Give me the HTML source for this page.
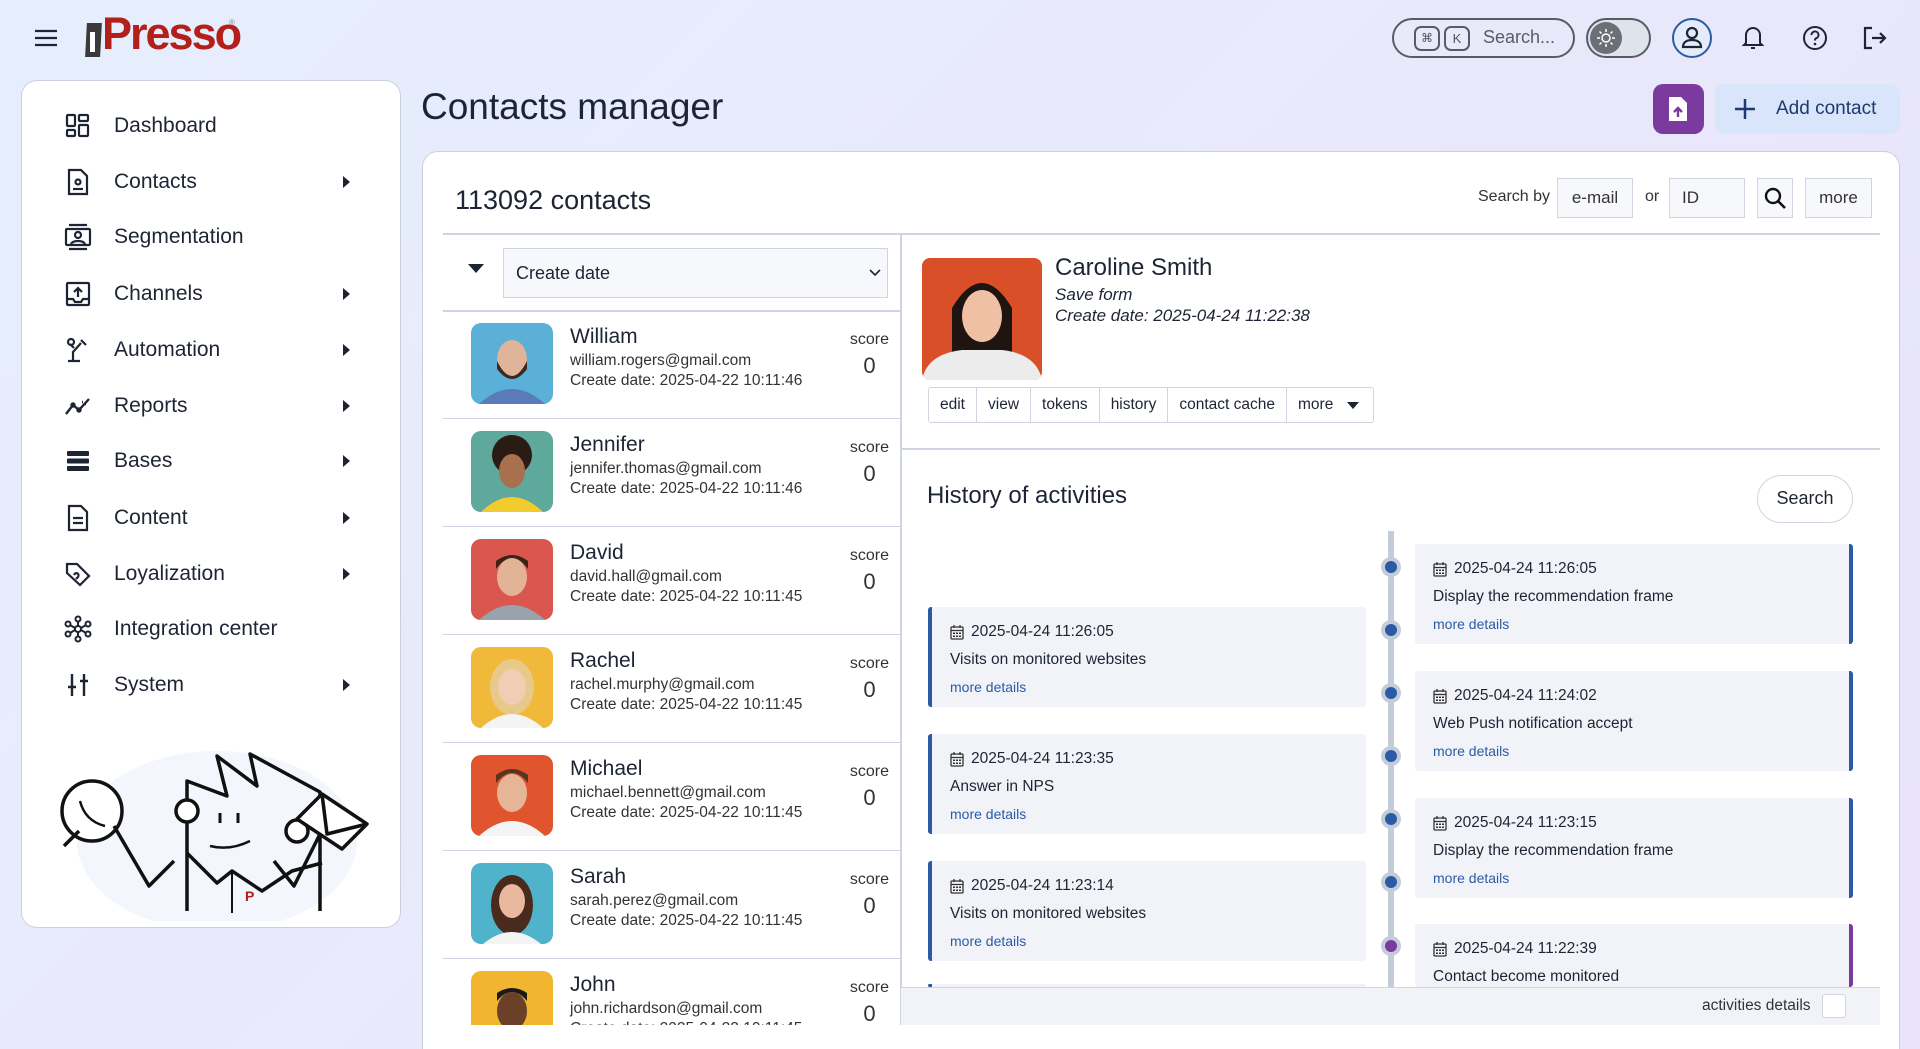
<!DOCTYPE html>
<html style="overflow:hidden;height:1049px"><head><meta charset="utf-8"><style>
*{box-sizing:border-box;margin:0;padding:0}
body{width:1920px;height:1049px;overflow:hidden;font-family:"Liberation Sans",sans-serif;color:#1d2433;background:linear-gradient(135deg,#e6eefd 0%,#e9e9fb 50%,#e8e2fa 100%);position:relative}
.a{position:absolute}
.side{left:21px;top:80px;width:380px;height:848px;background:#fff;border:1.5px solid #c9d0de;border-radius:16px}
.mi{position:absolute;left:0;width:100%;height:40px;display:flex;align-items:center;font-size:21px}
.mi svg{position:absolute;left:42px;width:28px;height:28px}
.mi span{position:absolute;left:92px}
.mi i{position:absolute;left:321px;width:0;height:0;border-top:6px solid transparent;border-bottom:6px solid transparent;border-left:7px solid #1d2433}
.card{left:422px;top:151px;width:1478px;height:898px;background:#fff;border:1.5px solid #c9d0de;border-bottom:none;border-radius:16px 16px 0 0}
.box{position:absolute;border:1.5px solid #cfd5e0;background:#f7f8fc;font-size:17px;display:flex;align-items:center;justify-content:center;color:#333}
.row{position:absolute;left:443px;width:458px;height:108px;border-bottom:1.5px solid #cfd5e0}
.av{position:absolute;left:28px;top:12px;width:82px;height:81px;border-radius:10px;overflow:hidden}
.nm{position:absolute;left:127px;top:14px;font-size:21px}
.em{position:absolute;left:127px;top:41px;font-size:15.5px;color:#333}
.dt{position:absolute;left:127px;top:61px;font-size:15.5px;color:#333}
.sc{position:absolute;right:12px;top:20px;font-size:16px;text-align:center;color:#333}
.sc b{display:block;font-weight:normal;font-size:22px;margin-top:4px}
.tc{position:absolute;width:438px;height:100px;background:#f1f3f9;border-radius:3px;font-size:15.5px}
.tc.l{left:928px;border-left:4px solid #2a5ba4}
.tc.r{left:1415px;border-right:4px solid #2a5ba4}
.tc .d{position:absolute;left:18px;top:16px;display:flex;align-items:center;gap:7px}
.tc .t{position:absolute;left:18px;top:44px}
.tc .m{position:absolute;left:18px;top:72px;color:#2a5ba4;font-size:14px}
.dot{position:absolute;left:1381px;width:20px;height:20px;border-radius:50%;background:#c5ccd9}
.dot:after{content:"";position:absolute;left:4px;top:4px;width:12px;height:12px;border-radius:50%;background:#2a5ba4}
.dot.p:after{background:#7b3aa0}
.btns{position:absolute;left:928px;top:387px;height:36px;display:flex;border:1.5px solid #cfd5e0;border-radius:3px}
.btns div{padding:0 11px;border-right:1.5px solid #cfd5e0;font-size:15.5px;display:flex;align-items:center}
.btns div:last-child{border:none}
</style></head><body>
<svg width="0" height="0" style="position:absolute"><defs><symbol id="cal" viewBox="0 0 14 16"><g fill="none" stroke="#333" stroke-width="1.3"><rect x="1" y="3" width="12" height="12" rx="1"/><path d="M1 6.5h12M4 1v3M10 1v3"/></g><g fill="#333"><rect x="3" y="8.5" width="2" height="1.5"/><rect x="6" y="8.5" width="2" height="1.5"/><rect x="9" y="8.5" width="2" height="1.5"/><rect x="3" y="11.5" width="2" height="1.5"/><rect x="6" y="11.5" width="2" height="1.5"/><rect x="9" y="11.5" width="2" height="1.5"/></g></symbol></defs></svg>
<!-- header -->
<svg class="a" style="left:34px;top:29px" width="24" height="18"><path d="M1 2h22M1 9h22M1 16h22" stroke="#1d2433" stroke-width="2.2"/></svg>
<div class="a" style="left:86px;top:23px;width:15px;height:34px;background:#3a3a3a;transform:skew(-3deg)"></div>
<div class="a" style="left:90px;top:32px;width:5px;height:20px;background:#fff"></div>
<div class="a" style="left:102px;top:8px;font-size:45px;font-weight:bold;color:#b3201a;letter-spacing:-2px">Presso</div>
<div class="a" style="left:229px;top:18px;font-size:8px;color:#888">®</div>

<div class="a" style="left:1392px;top:18px;width:183px;height:40px;border:2.5px solid #555c66;border-radius:20px"></div>
<div class="a" style="left:1414px;top:26px;width:26px;height:25px;border:2px solid #555c66;border-radius:7px;font-size:12px;text-align:center;line-height:21px;color:#555">⌘</div>
<div class="a" style="left:1444px;top:26px;width:26px;height:25px;border:2px solid #555c66;border-radius:7px;font-size:13px;text-align:center;line-height:21px;color:#555">K</div>
<div class="a" style="left:1483px;top:27px;font-size:18px;color:#555c66">Search...</div>
<div class="a" style="left:1586px;top:18px;width:65px;height:40px;border:2.5px solid #555c66;border-radius:20px;background:#dfe3ec"></div>
<div class="a" style="left:1590px;top:22px;width:32px;height:32px;border-radius:50%;background:#6b7078"></div>
<svg class="a" style="left:1596px;top:28px" width="20" height="20"><circle cx="10" cy="10" r="4" fill="none" stroke="#fff" stroke-width="1.5"/><path d="M10 1v3M10 16v3M1 10h3M16 10h3M3.5 3.5l2 2M14.5 14.5l2 2M3.5 16.5l2-2M14.5 5.5l2-2" stroke="#fff" stroke-width="1.5"/></svg>
<div class="a" style="left:1672px;top:18px;width:40px;height:40px;border:2.5px solid #2a5ba4;border-radius:50%;background:#e4ecfb"></div>
<svg class="a" style="left:1680px;top:25px" width="24" height="26"><circle cx="12" cy="8" r="5" fill="none" stroke="#1d2433" stroke-width="2.2"/><path d="M3 22c0-5 4-7 9-7s9 2 9 7z" fill="none" stroke="#1d2433" stroke-width="2.2"/></svg>
<svg class="a" style="left:1741px;top:24px" width="24" height="28"><path d="M5 19V11a7 7 0 0 1 14 0v8l2 2H3z M10 24h4" fill="none" stroke="#1d2433" stroke-width="2"/></svg>
<svg class="a" style="left:1802px;top:25px" width="26" height="26"><circle cx="13" cy="13" r="11" fill="none" stroke="#1d2433" stroke-width="2"/><path d="M9.5 10a3.5 3.5 0 1 1 4.5 3.3c-1 .4-1 1-1 2.2" fill="none" stroke="#1d2433" stroke-width="2"/><circle cx="13" cy="19" r="1.3" fill="#1d2433"/></svg>
<svg class="a" style="left:1862px;top:26px" width="26" height="24"><path d="M10 2H3v20h7M10 12h13M18 7l5 5-5 5" fill="none" stroke="#1d2433" stroke-width="2.2"/></svg>

<div class="a" style="left:421px;top:86px;font-size:37px">Contacts manager</div>
<div class="a" style="left:1653px;top:84px;width:51px;height:50px;background:#7a3a9e;border-radius:10px"></div>
<svg class="a" style="left:1667px;top:96px" width="22" height="26"><path d="M2 1h12l6 6v18H2z" fill="#fff"/><path d="M11 21v-8M7 16l4-4 4 4" stroke="#7a3a9e" stroke-width="2.4" fill="none"/></svg>
<div class="a" style="left:1715px;top:84px;width:185px;height:50px;background:#d8e5fb;border-radius:10px;font-size:19px;color:#1c3a6e;line-height:50px;padding-left:61px">Add contact</div>
<svg class="a" style="left:1735px;top:99px" width="20" height="20"><path d="M10 0v20M0 10h20" stroke="#1c3a6e" stroke-width="2.5"/></svg>

<!-- sidebar -->
<div class="a side">
<div class="mi" style="top:25px"><svg viewBox="0 0 28 28"><g fill="none" stroke="#1d2433" stroke-width="2.2"><rect x="3" y="3" width="8" height="11" rx="1"/><rect x="15" y="3" width="9" height="6" rx="1"/><rect x="3" y="18" width="8" height="6" rx="1"/><rect x="15" y="13" width="9" height="11" rx="1"/></g></svg><span>Dashboard</span></div>
<div class="mi" style="top:81px"><svg viewBox="0 0 28 28"><g fill="none" stroke="#1d2433" stroke-width="2.2"><path d="M5 2h12l6 6v18H5z"/><circle cx="14" cy="14" r="2.5"/><path d="M9 21h10"/></g></svg><span>Contacts</span><i></i></div>
<div class="mi" style="top:136px"><svg viewBox="0 0 28 28"><g fill="none" stroke="#1d2433" stroke-width="2.2"><path d="M5 2h18M5 26h18"/><rect x="2" y="6" width="24" height="16" rx="1"/><circle cx="14" cy="12" r="3"/><path d="M7 21c2-4 12-4 14 0"/></g></svg><span>Segmentation</span></div>
<div class="mi" style="top:193px"><svg viewBox="0 0 28 28"><g fill="none" stroke="#1d2433" stroke-width="2.2"><rect x="3" y="3" width="22" height="22" rx="1"/><path d="M14 17V8M10 12l4-4 4 4M3 19h6l2 3h6l2-3h6"/></g></svg><span>Channels</span><i></i></div>
<div class="mi" style="top:249px"><svg viewBox="0 0 28 28"><g fill="none" stroke="#1d2433" stroke-width="2.2"><path d="M4 25h12M9 25V16l8-9M6 8l4 4M17 4l5 5"/><circle cx="7" cy="6" r="3"/></g></svg><span>Automation</span><i></i></div>
<div class="mi" style="top:305px"><svg viewBox="0 0 28 28"><g fill="none" stroke="#1d2433" stroke-width="2.4"><path d="M2 22l7-9 6 5 10-11"/><circle cx="9" cy="13" r="1.5"/><circle cx="15" cy="18" r="1.5"/><path d="M18 10h1M21 12h1"/></g></svg><span>Reports</span><i></i></div>
<div class="mi" style="top:360px"><svg viewBox="0 0 28 28"><g fill="#1d2433"><rect x="3" y="4" width="22" height="5" rx="1"/><rect x="3" y="11.5" width="22" height="5" rx="1"/><rect x="3" y="19" width="22" height="5" rx="1"/></g></svg><span>Bases</span><i></i></div>
<div class="mi" style="top:417px"><svg viewBox="0 0 28 28"><g fill="none" stroke="#1d2433" stroke-width="2.2"><path d="M5 2h12l6 6v18H5z"/><path d="M9 14h10M9 19h10"/></g></svg><span>Content</span><i></i></div>
<div class="mi" style="top:473px"><svg viewBox="0 0 28 28"><g fill="none" stroke="#1d2433" stroke-width="2.2"><path d="M3 4h10l12 12-9 9L3 13z"/><path d="M10 15c2-4 6-1 4 2l-2 2"/></g></svg><span>Loyalization</span><i></i></div>
<div class="mi" style="top:528px"><svg viewBox="0 0 28 28"><g fill="none" stroke="#1d2433" stroke-width="2"><circle cx="14" cy="14" r="3"/><circle cx="14" cy="4" r="2.5"/><circle cx="14" cy="24" r="2.5"/><circle cx="4" cy="9" r="2.5"/><circle cx="24" cy="9" r="2.5"/><circle cx="4" cy="19" r="2.5"/><circle cx="24" cy="19" r="2.5"/><path d="M14 7v4M14 17v4M6 10l5 3M22 10l-5 3M6 18l5-3M22 18l-5-3"/></g></svg><span>Integration center</span></div>
<div class="mi" style="top:584px"><svg viewBox="0 0 28 28"><g fill="none" stroke="#1d2433" stroke-width="2.4"><path d="M8 3v22M4 16h8M20 3v22M16 10h8"/></g></svg><span>System</span><i></i></div>
<svg class="a" style="left:30px;top:640px" width="330" height="200" viewBox="0 0 330 200"><ellipse cx="165" cy="120" rx="140" ry="90" fill="#f3f6fc"/><g fill="none" stroke="#111" stroke-width="3.5" stroke-linejoin="round">
<path d="M135 190V60l40 15 -10-40 40 30 -7-32 70 38v119"/><circle cx="135" cy="90" r="11" fill="#fff"/><circle cx="245" cy="110" r="11" fill="#fff"/>
<path d="M168 92v10M186 92v10" stroke-width="3"/><path d="M158 125q20 5 40-5" stroke-width="2.5"/>
<path d="M135 132l30 30 15-12 30 20 30-20 30-8"/><path d="M180 152v40" stroke-width="2"/>
<circle cx="40" cy="90" r="30" fill="#fff"/><path d="M12 125l15-15"/><path d="M28 80q5 20 25 25" stroke-width="2.5"/>
<path d="M62 105l35 60 25-25M272 105l-30 60-20-25"/>
<path d="M245 98l25-25 45 30-25 25z" fill="#fff"/><path d="M270 73l5 40 40-10"/></g>
<text x="193" y="180" font-size="14" fill="#b3201a" font-weight="bold" font-family="Liberation Sans">P</text></svg>
</div>

<!-- main card -->
<div class="a card"></div>
<div class="a" style="left:455px;top:185px;font-size:27px">113092 contacts</div>
<div class="a" style="left:1478px;top:188px;font-size:16px;color:#333">Search by</div>
<div class="box" style="left:1557px;top:178px;width:76px;height:40px">e-mail</div>
<div class="a" style="left:1645px;top:188px;font-size:16px;color:#333">or</div>
<div class="box" style="left:1669px;top:178px;width:76px;height:40px;justify-content:flex-start;padding-left:12px">ID</div>
<div class="box" style="left:1757px;top:178px;width:36px;height:40px"><svg width="22" height="22"><circle cx="9" cy="9" r="7" fill="none" stroke="#111" stroke-width="2.4"/><path d="M14 14l7 7" stroke="#111" stroke-width="2.6"/></svg></div>
<div class="box" style="left:1805px;top:178px;width:67px;height:40px">more</div>
<div class="a" style="left:443px;top:233px;width:1437px;height:1.5px;background:#cfd5e0"></div>
<div class="a" style="left:900px;top:234px;width:1.5px;height:791px;background:#cfd5e0"></div>

<div class="a" style="left:468px;top:264px;border-left:8px solid transparent;border-right:8px solid transparent;border-top:9px solid #1d2433"></div>
<div class="box" style="left:503px;top:248px;width:385px;height:50px;justify-content:flex-start;padding-left:12px;font-size:18px;color:#1d2433">Create date</div>
<svg class="a" style="left:869px;top:269px" width="12" height="8"><path d="M1 1l5 5 5-5" fill="none" stroke="#1d2433" stroke-width="1.6"/></svg>
<div class="a" style="left:443px;top:310px;width:458px;height:1.5px;background:#cfd5e0"></div>

<div class="row" style="top:311px"><div class="av" style="background:#5ab0d6"><svg width="82" height="81"><ellipse cx="41" cy="36" rx="15" ry="19" fill="#e0b49a"/><path d="M26 38q15 30 30 0v8q-15 20-30 0z" fill="#3a2a20"/><path d="M8 81q33-30 66 0z" fill="#5a7ab8"/></svg></div><div class="nm">William</div><div class="em">william.rogers@gmail.com</div><div class="dt">Create date: 2025-04-22 10:11:46</div><div class="sc">score<b>0</b></div></div>
<div class="row" style="top:419px"><div class="av" style="background:#5fa89c"><svg width="82" height="81"><circle cx="41" cy="24" r="20" fill="#2a1c14"/><ellipse cx="41" cy="40" rx="13" ry="17" fill="#a8704e"/><path d="M10 81q31-30 62 0z" fill="#f2cb2e"/></svg></div><div class="nm">Jennifer</div><div class="em">jennifer.thomas@gmail.com</div><div class="dt">Create date: 2025-04-22 10:11:46</div><div class="sc">score<b>0</b></div></div>
<div class="row" style="top:527px"><div class="av" style="background:#d9574f"><svg width="82" height="81"><ellipse cx="41" cy="38" rx="15" ry="19" fill="#e3b398"/><path d="M25 30q16-22 32 0v-8q-16-12-32 0z" fill="#3a2418"/><path d="M8 81q33-30 66 0z" fill="#9aa3ad"/></svg></div><div class="nm">David</div><div class="em">david.hall@gmail.com</div><div class="dt">Create date: 2025-04-22 10:11:45</div><div class="sc">score<b>0</b></div></div>
<div class="row" style="top:635px"><div class="av" style="background:#f0b93a"><svg width="82" height="81"><ellipse cx="41" cy="40" rx="22" ry="28" fill="#e8c98a"/><ellipse cx="41" cy="40" rx="14" ry="18" fill="#f0cdb4"/><path d="M10 81q31-28 62 0z" fill="#f4f4f4"/></svg></div><div class="nm">Rachel</div><div class="em">rachel.murphy@gmail.com</div><div class="dt">Create date: 2025-04-22 10:11:45</div><div class="sc">score<b>0</b></div></div>
<div class="row" style="top:743px"><div class="av" style="background:#e0552e"><svg width="82" height="81"><ellipse cx="41" cy="38" rx="15" ry="19" fill="#e6b496"/><path d="M25 28q16-20 32 0v-8q-16-12-32 0z" fill="#5a3420"/><path d="M8 81q33-30 66 0z" fill="#f4f4f4"/></svg></div><div class="nm">Michael</div><div class="em">michael.bennett@gmail.com</div><div class="dt">Create date: 2025-04-22 10:11:45</div><div class="sc">score<b>0</b></div></div>
<div class="row" style="top:851px"><div class="av" style="background:#4fb3cc"><svg width="82" height="81"><ellipse cx="41" cy="42" rx="21" ry="30" fill="#4a2a1c"/><ellipse cx="41" cy="38" rx="13" ry="17" fill="#eab89c"/><path d="M12 81q29-24 58 0z" fill="#f4f4f4"/></svg></div><div class="nm">Sarah</div><div class="em">sarah.perez@gmail.com</div><div class="dt">Create date: 2025-04-22 10:11:45</div><div class="sc">score<b>0</b></div></div>
<div class="row" style="top:959px;border:none;height:66px;overflow:hidden"><div class="av" style="background:#f2b530"><svg width="82" height="81"><ellipse cx="41" cy="40" rx="15" ry="19" fill="#6a4028"/><path d="M26 30q15-18 30 0v-8q-15-10-30 0z" fill="#1a1a1a"/></svg></div><div class="nm">John</div><div class="em">john.richardson@gmail.com</div><div class="dt">Create date: 2025-04-22 10:11:45</div><div class="sc">score<b>0</b></div></div>

<!-- detail -->
<div class="a" style="left:922px;top:258px;width:120px;height:122px;border-radius:8px;background:#d94f27;overflow:hidden"><svg width="120" height="122"><path d="M30 122V50q30-50 60 0v72z" fill="#1e1410"/><ellipse cx="60" cy="58" rx="20" ry="26" fill="#efc0a4"/><path d="M0 122q5-26 40-30h40q35 4 40 30z" fill="#ececec"/></svg></div>
<div class="a" style="left:1055px;top:254px;font-size:24px">Caroline Smith</div>
<div class="a" style="left:1055px;top:285px;font-size:17px;font-style:italic">Save form</div>
<div class="a" style="left:1055px;top:306px;font-size:17px;font-style:italic">Create date: 2025-04-24 11:22:38</div>
<div class="btns"><div>edit</div><div>view</div><div>tokens</div><div>history</div><div>contact cache</div><div style="padding-right:40px;position:relative">more<span style="position:absolute;right:14px;top:14px;border-left:6px solid transparent;border-right:6px solid transparent;border-top:7px solid #1d2433"></span></div></div>
<div class="a" style="left:901px;top:448px;width:979px;height:1.5px;background:#cfd5e0"></div>
<div class="a" style="left:927px;top:482px;font-size:24px">History of activities</div>
<div class="a" style="left:1757px;top:475px;width:96px;height:48px;border:1.5px solid #cfd5e0;border-radius:24px;font-size:18px;text-align:center;line-height:45px">Search</div>

<div class="a" style="left:1388px;top:531px;width:6px;height:456px;background:#c5ccd9"></div>
<div class="tc r" style="top:544px"><div class="d"><svg width="14" height="16"><use href="#cal"/></svg>2025-04-24 11:26:05</div><div class="t">Display the recommendation frame</div><div class="m">more details</div></div>
<div class="tc r" style="top:671px"><div class="d"><svg width="14" height="16"><use href="#cal"/></svg>2025-04-24 11:24:02</div><div class="t">Web Push notification accept</div><div class="m">more details</div></div>
<div class="tc r" style="top:798px"><div class="d"><svg width="14" height="16"><use href="#cal"/></svg>2025-04-24 11:23:15</div><div class="t">Display the recommendation frame</div><div class="m">more details</div></div>
<div class="tc r" style="top:924px;height:63px;border-right-color:#7b3aa0"><div class="d"><svg width="14" height="16"><use href="#cal"/></svg>2025-04-24 11:22:39</div><div class="t">Contact become monitored</div></div>
<div class="tc l" style="top:607px"><div class="d"><svg width="14" height="16"><use href="#cal"/></svg>2025-04-24 11:26:05</div><div class="t">Visits on monitored websites</div><div class="m">more details</div></div>
<div class="tc l" style="top:734px"><div class="d"><svg width="14" height="16"><use href="#cal"/></svg>2025-04-24 11:23:35</div><div class="t">Answer in NPS</div><div class="m">more details</div></div>
<div class="tc l" style="top:861px"><div class="d"><svg width="14" height="16"><use href="#cal"/></svg>2025-04-24 11:23:14</div><div class="t">Visits on monitored websites</div><div class="m">more details</div></div>
<div class="tc l" style="top:984px;height:3px"></div>
<div class="dot" style="top:557px"></div><div class="dot" style="top:620px"></div><div class="dot" style="top:683px"></div><div class="dot" style="top:746px"></div><div class="dot" style="top:809px"></div><div class="dot" style="top:872px"></div><div class="dot p" style="top:936px"></div>
<div class="a" style="left:901px;top:987px;width:979px;height:38px;background:#f1f3f9;border-top:1.5px solid #cfd5e0"></div>
<div class="a" style="left:1702px;top:997px;font-size:15.5px;color:#333">activities details</div>
<div class="a" style="left:1822px;top:994px;width:24px;height:24px;border:1.5px solid #cfd5e0;border-radius:3px;background:#fff"></div>
<div class="a" style="left:423px;top:1025px;width:1476px;height:24px;background:#fff"></div>
</body></html>
